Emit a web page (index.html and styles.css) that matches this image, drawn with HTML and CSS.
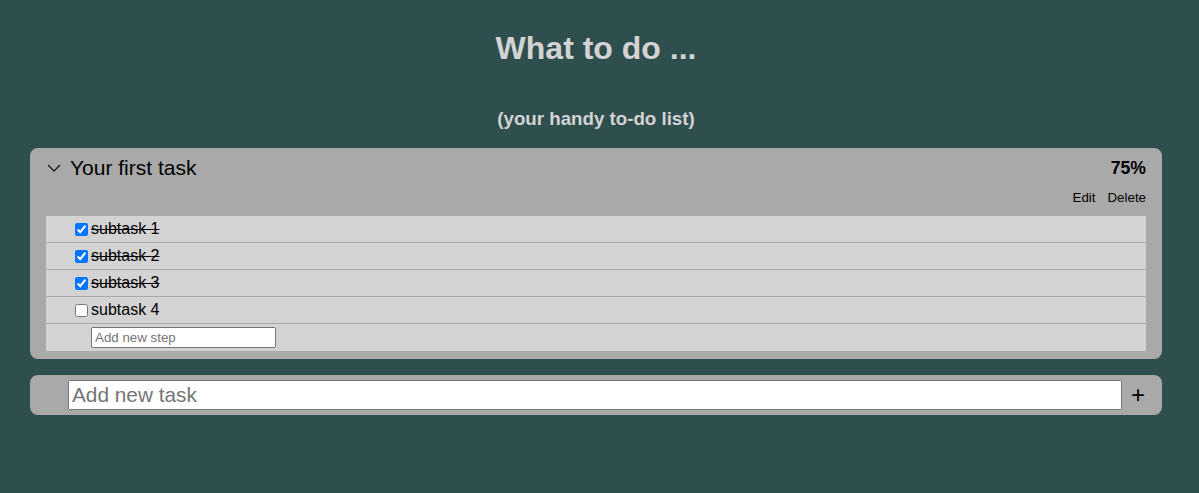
FILE: index.html
```html
<!DOCTYPE html>
<html lang="en">
<head>
<meta charset="utf-8">
<title>What to do ...</title>
<link rel="stylesheet" href="styles.css">
</head>
<body>
<main class="app">
  <header class="page-header">
    <h1 class="title">What to do ...</h1>
    <h3 class="subtitle">(your handy to-do list)</h3>
  </header>

  <section class="task-card">
    <div class="task-head">
      <svg class="chevron" width="16" height="16" viewBox="0 0 16 16" aria-hidden="true">
        <path d="M2.5 5.5 L8 11 L13.5 5.5" fill="none" stroke="#1a1a1a" stroke-width="1.4" stroke-linecap="round" stroke-linejoin="round"/>
      </svg>
      <span class="task-name">Your first task</span>
      <span class="task-progress">75%</span>
    </div>
    <div class="task-actions">
      <button class="link-btn" type="button">Edit</button>
      <button class="link-btn" type="button">Delete</button>
    </div>
    <ul class="steps">
      <li class="step done"><input type="checkbox" checked><span class="step-text">subtask 1</span></li>
      <li class="step done"><input type="checkbox" checked><span class="step-text">subtask 2</span></li>
      <li class="step done"><input type="checkbox" checked><span class="step-text">subtask 3</span></li>
      <li class="step"><input type="checkbox"><span class="step-text">subtask 4</span></li>
      <li class="step new-step"><input class="step-input" type="text" placeholder="Add new step"></li>
    </ul>
  </section>

  <form class="new-task" onsubmit="return false">
    <input class="task-input" type="text" placeholder="Add new task">
    <button class="add-btn" type="button">+</button>
  </form>
</main>
</body>
</html>
```

FILE: styles.css
```css
html, body {
  margin: 0;
  padding: 0;
  background: #2f4f4f;
  font-family: "Liberation Sans", Arial, sans-serif;
}

.app {
  width: 1132px;
  margin-left: 30px;
}

.page-header {
  padding-top: 30px;
  text-align: center;
  color: #d3d3d3;
}

.title {
  margin: 0;
  font-size: 32px;
  font-weight: bold;
}

.subtitle {
  margin: 41px 0 18px;
  font-size: 18.72px;
  font-weight: bold;
}

.task-card {
  background: #a9a9a9;
  border-radius: 8px;
  padding: 8px 16px 8px;
}

.task-head {
  display: flex;
  align-items: center;
  height: 24px;
}

.chevron {
  display: block;
  flex: none;
  margin-right: 8px;
}

.task-name {
  font-size: 21px;
  color: #000;
}

.task-progress {
  margin-left: auto;
  font-size: 17.6px;
  font-weight: bold;
  color: #000;
}

.task-actions {
  display: flex;
  justify-content: flex-end;
  gap: 12px;
  margin: 10px 0 11px;
}

.link-btn {
  background: none;
  border: none;
  padding: 0;
  margin: 0;
  font-family: "Liberation Sans", Arial, sans-serif;
  font-size: 13.333px;
  line-height: normal;
  color: #000;
  cursor: pointer;
}

.steps {
  list-style: none;
  margin: 0;
  padding: 0;
}

.step {
  display: flex;
  align-items: center;
  box-sizing: border-box;
  height: 27px;
  padding-left: 25px;
  background: #d3d3d3;
  border-bottom: 1px solid #a9a9a9;
  font-size: 16px;
  color: #000;
}

.step input[type="checkbox"] {
  margin: 3px 3px 3px 4px;
}

.step.done .step-text {
  text-decoration: line-through;
}

.step.new-step {
  border-bottom: none;
  padding-left: 45px;
}

.step-input {
  box-sizing: border-box;
  width: 185px;
  height: 21px;
  font-family: "Liberation Sans", Arial, sans-serif;
  font-size: 13.333px;
}

.new-task {
  display: flex;
  align-items: center;
  margin-top: 16px;
  background: #a9a9a9;
  border-radius: 8px;
  padding: 5px 12px 5px 38px;
}

.task-input {
  flex: 1;
  box-sizing: border-box;
  height: 30px;
  margin: 0;
  font-family: "Liberation Sans", Arial, sans-serif;
  font-size: 20.8px;
}

.add-btn {
  margin-left: 4px;
  padding: 0 5px;
  background: none;
  border: none;
  font-family: "Liberation Sans", Arial, sans-serif;
  font-size: 24px;
  line-height: 1;
  color: #000;
  cursor: pointer;
}
```
